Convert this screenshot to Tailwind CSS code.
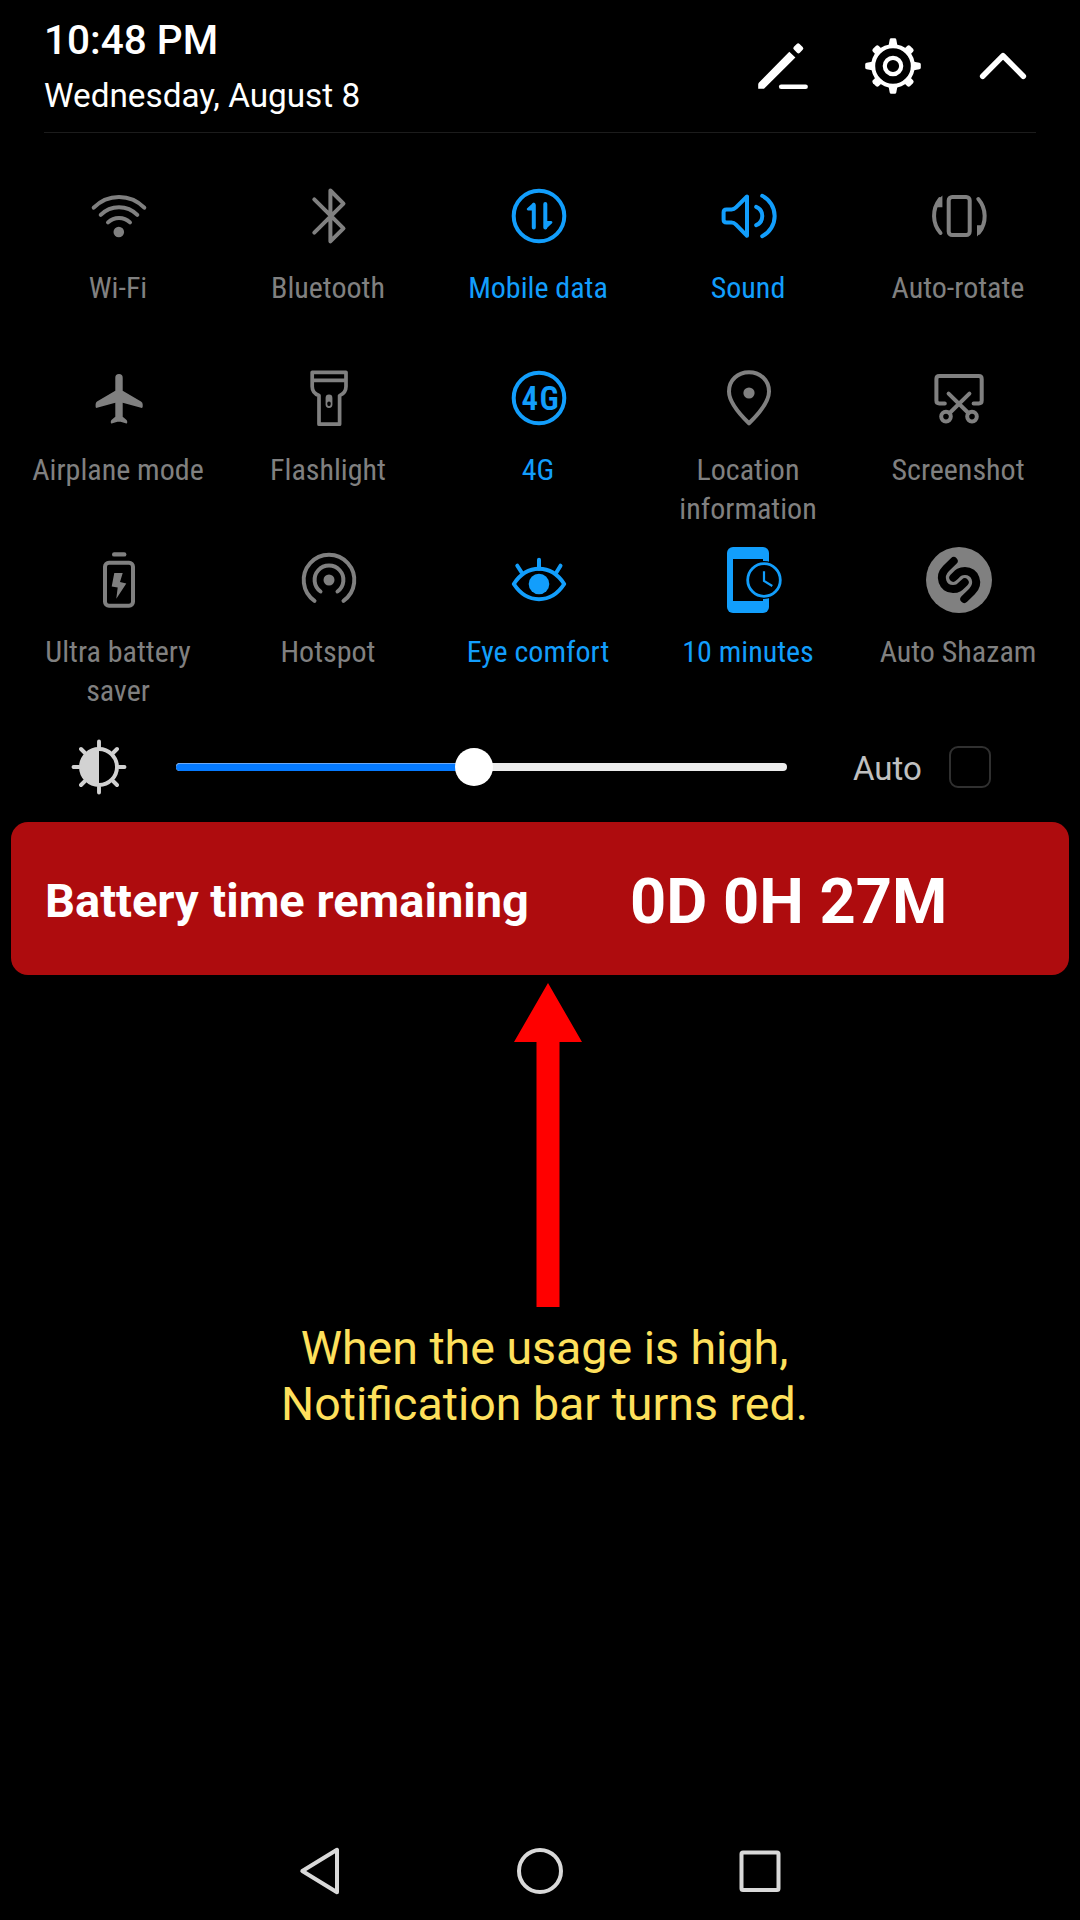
<!DOCTYPE html>
<html lang="en">
<head>
<meta charset="utf-8">
<title>Quick settings</title>
<script src="https://cdn.jsdelivr.net/npm/@tailwindcss/browser@4"></script>
</head>
<body class="bg-black">
<div class="flex h-[1920px] w-[1080px] flex-col overflow-hidden bg-black font-['Roboto',sans-serif] text-white">

  <!-- Header -->
  <header class="mx-11 flex h-[133px] items-start justify-between border-b border-[#1c1c1c]">
    <div class="pt-[17px]">
      <div class="text-[40.5px] leading-[47px] font-medium whitespace-nowrap">10:48 PM</div>
      <div class="mt-3 text-[33.3px] leading-[40px] whitespace-nowrap">Wednesday, August 8</div>
    </div>
    <div class="-mr-[3px] flex gap-[38px] pt-[30px]">
      <svg class="size-[72px]" viewBox="0 0 72 72" fill="white">
        <path d="M12 52.5 L42.3 21.7 L48.4 27.4 L17.5 58.2 Q17 58.7 16 58.7 H11.2 V54.5 Q11.2 53.3 12 52.5Z"/>
        <rect x="47.1" y="14.3" width="8.4" height="8" rx="2" transform="rotate(45 51.3 18.3)"/>
        <path d="M34.2 56.7H58.6" stroke="white" stroke-width="4.6" stroke-linecap="round"/>
      </svg>
      <svg class="size-[72px]" viewBox="0 0 72 72" fill="none" stroke="white" stroke-width="4">
        <circle cx="36" cy="36" r="19.8"/>
        <circle cx="36" cy="36" r="8.2" stroke-width="4.2"/>
        <g fill="white" stroke="none">
          <path id="tooth" d="M31.400 16.5 L32.700 9.6 Q32.900 8.2 34.2 8.2 H37.8 Q39.100 8.2 39.300 9.6 L40.600 16.5Z"/>
          <use href="#tooth" transform="rotate(90 36 36)"/>
          <use href="#tooth" transform="rotate(180 36 36)"/>
          <use href="#tooth" transform="rotate(270 36 36)"/>
          <path id="tooth2" d="M31.800 18 L31.800 11.8 Q32 9.700 34 9.700 H38 Q40 9.700 40.200 11.8 L40.200 18Z" transform="rotate(45 36 36)"/>
          <use href="#tooth2" transform="rotate(90 36 36)"/>
          <use href="#tooth2" transform="rotate(180 36 36)"/>
          <use href="#tooth2" transform="rotate(270 36 36)"/>
        </g>
      </svg>
      <svg class="size-[72px]" viewBox="0 0 72 72" fill="none" stroke="white" stroke-width="5.6" stroke-linecap="round" stroke-linejoin="round">
        <path d="M15.7 46.2 L36 25.8 L56.3 46.2"/>
      </svg>
    </div>
  </header>

  <!-- Toggles -->
  <main class="mr-[16px] ml-[14px] mt-[47px] grid h-[546px] grid-cols-5 grid-rows-3 text-center font-['Roboto_Condensed','Roboto',sans-serif] text-[30px] leading-[39px] text-[#808080] font-stretch-condensed">
    <div class="flex flex-col items-center gap-4">
      <svg class="size-[72px]" viewBox="0 0 72 72" fill="none" stroke="currentColor" stroke-width="4" stroke-linecap="round">
        <path d="M10.7 27.7A35 35 0 0 1 61.3 27.7M17.7 34.9A25.6 25.6 0 0 1 54.3 34.9M25 42.4A16 16 0 0 1 47 42.4"/>
        <circle cx="35.8" cy="52" r="5.3" fill="currentColor" stroke="none"/>
      </svg>
      <span class="-ml-[2px]">Wi-Fi</span>
    </div>
    <div class="flex flex-col items-center gap-4">
      <svg class="size-[72px]" viewBox="0 0 72 72" fill="none" stroke="currentColor" stroke-width="4" stroke-linecap="round" stroke-linejoin="round">
        <path d="M21.3 19.3L50.5 48.3L37.4 61.3V10.5L50.5 23.7L21.3 52.7"/>
      </svg>
      <span class="-ml-[2px]">Bluetooth</span>
    </div>
    <div class="flex flex-col items-center gap-4 text-[#129efc]">
      <svg class="size-[72px]" viewBox="0 0 72 72" fill="none" stroke="currentColor" stroke-width="4" stroke-linecap="round">
        <circle cx="36" cy="36" r="25.3"/>
        <path d="M30.8 25V47.6M42.3 24V47.5"/>
        <path d="M30.8 23.8L25 29.2H31M42.3 48L48.2 42.3H42" stroke-width="2.4" fill="currentColor" stroke-linejoin="round"/>
      </svg>
      <span class="-ml-[2px]">Mobile data</span>
    </div>
    <div class="flex flex-col items-center gap-4 text-[#129efc]">
      <svg class="size-[72px]" viewBox="0 0 72 72" fill="none" stroke="currentColor" stroke-width="4" stroke-linecap="round" stroke-linejoin="round">
        <path d="M34 16.5V55.8L23 44.6Q21 42.6 18.5 42.6H13.5Q10.6 42.6 10.6 39.8V32.2Q10.6 29.4 13.5 29.4H18.5Q21 29.4 23 27.4Z"/>
        <path d="M43.2 26.8A10 10 0 0 1 43.2 45.2M49.2 15.8A22.6 22.6 0 0 1 49.2 56.2"/>
      </svg>
      <span class="-ml-[2px]">Sound</span>
    </div>
    <div class="flex flex-col items-center gap-4">
      <svg class="size-[72px]" viewBox="0 0 72 72" fill="none" stroke="currentColor" stroke-width="4" stroke-linecap="round">
        <rect x="25.7" y="17" width="21" height="38" rx="3.5"/>
        <path d="M17.5 53A26.5 26.5 0 0 1 16.8 19.2M55.3 19A26.5 26.5 0 0 1 56 52.6"/>
        <path d="M18.600 17.5V26.500H14.3L16 20ZM54.8 54.5V46H59.5L57 52Z" stroke-width="1.6" fill="currentColor"/>
      </svg>
      <span class="-ml-[2px]">Auto-rotate</span>
    </div>

    <div class="flex flex-col items-center gap-4">
      <svg class="size-[72px]" viewBox="0 0 72 72" fill="currentColor">
        <path d="M32.3 15.7A3.7 3.7 0 0 1 39.7 15.7V28.7L58 39.6Q59.7 40.6 59.7 42.4V44.6Q59.7 46.3 58 45.8L39.7 40.7V54.7L43 57.4Q44.2 58.4 44.2 59.6V60.4Q44.2 61.8 42.6 61.2L37.6 59.7H34.4L29.4 61.2Q27.8 61.8 27.8 60.4V59.6Q27.8 58.4 29 57.4L32.3 54.7V40.7L14 45.8Q12.6 46.3 12.6 44.6V42.4Q12.6 40.6 14 39.6L32.3 28.7Z"/>
      </svg>
      <span class="-ml-[2px] whitespace-nowrap">Airplane mode</span>
    </div>
    <div class="flex flex-col items-center gap-4">
      <svg class="size-[72px]" viewBox="0 0 72 72" fill="none" stroke="currentColor" stroke-width="3.7" stroke-linejoin="round">
        <path d="M19.2 10.3H53V24.5Q53 31 46.6 33.6V62.2H26V33.6Q19.2 31 19.2 24.5ZM19.2 18.3H53"/>
        <rect x="32.6" y="32.6" width="6.8" height="13.4" rx="3.4" fill="currentColor" stroke="none"/>
        <ellipse cx="36" cy="41.8" rx="1.8" ry="2.4" class="fill-black" stroke="none"/>
      </svg>
      <span class="-ml-[2px]">Flashlight</span>
    </div>
    <div class="flex flex-col items-center gap-4 text-[#129efc]">
      <svg class="size-[72px]" viewBox="0 0 72 72">
        <circle cx="36" cy="36" r="25.3" fill="none" stroke="currentColor" stroke-width="4"/>
        <text x="18.400" y="47.6" class="text-[33px] font-semibold tracking-[1.5px]" fill="currentColor">4G</text>
      </svg>
      <span class="-ml-[2px]">4G</span>
    </div>
    <div class="flex flex-col items-center gap-4">
      <svg class="size-[72px]" viewBox="0 0 72 72" fill="none" stroke="currentColor" stroke-width="4" stroke-linejoin="round">
        <path d="M36 61.3C30 55.5 16 42 16 29.5C16 18 25 10.3 36 10.3S56 18 56 29.5C56 42 42 55.5 36 61.3Z"/>
        <circle cx="36" cy="31" r="5.6" fill="currentColor" stroke="none"/>
      </svg>
      <span class="-ml-[2px]">Location<br>information</span>
    </div>
    <div class="flex flex-col items-center gap-4">
      <svg class="size-[72px]" viewBox="0 0 72 72" fill="none" stroke="currentColor" stroke-width="4" stroke-linecap="round" stroke-linejoin="round">
        <path d="M21.8 41.4H16.3Q13.4 41.4 13.4 38.5V16.9Q13.4 14 16.3 14H55.8Q58.7 14 58.7 16.9V38.5Q58.7 41.4 55.8 41.4H50.6"/>
        <path d="M25.6 31.6L45.6 51.2M46.4 31.6L26.4 51.2"/>
        <circle cx="23" cy="54.6" r="4.8"/>
        <circle cx="49" cy="54.6" r="4.8"/>
      </svg>
      <span class="-ml-[2px]">Screenshot</span>
    </div>

    <div class="flex flex-col items-center gap-4">
      <svg class="size-[72px]" viewBox="0 0 72 72" fill="none" stroke="currentColor" stroke-width="4">
        <rect x="22" y="18.8" width="28" height="43" rx="4"/>
        <path d="M31.2 10.4H41.2" stroke-width="4.4" stroke-linecap="round"/>
        <path d="M31.3 29H39.7L37 38L43.3 39.5L33.3 54.7L34.7 43.5L28.7 42.5Z" fill="currentColor" stroke="none"/>
      </svg>
      <span class="-ml-[2px]">Ultra battery<br>saver</span>
    </div>
    <div class="flex flex-col items-center gap-4">
      <svg class="size-[72px]" viewBox="0 0 72 72" fill="none" stroke="currentColor" stroke-width="4" stroke-linecap="round">
        <path d="M21.5 56.8A25.3 25.3 0 1 1 50.5 56.8M27.5 47.5A14.4 14.4 0 1 1 44.5 47.5"/>
        <circle cx="36" cy="36" r="5.5" fill="currentColor" stroke="none"/>
      </svg>
      <span class="-ml-[2px]">Hotspot</span>
    </div>
    <div class="flex flex-col items-center gap-4 text-[#129efc]">
      <svg class="size-[72px]" viewBox="0 0 72 72" fill="none" stroke="currentColor" stroke-width="4" stroke-linecap="round" stroke-linejoin="round">
        <path d="M10.8 40C17 30.5 26 24.8 36 24.8S55 30.5 61.2 40C55 49.5 46 55.2 36 55.2S17 49.5 10.8 40Z"/>
        <path d="M36 15.8V25M14.3 21.7L18.5 28.3M57.5 21.7L53.5 28.3"/>
        <circle cx="36" cy="40" r="10.3" fill="currentColor" stroke="none"/>
      </svg>
      <span class="-ml-[2px]">Eye comfort</span>
    </div>
    <div class="flex flex-col items-center gap-4 text-[#129efc]">
      <svg class="size-[72px]" viewBox="0 0 72 72" fill="none">
        <rect x="14" y="3" width="42" height="66" rx="6" fill="currentColor"/>
        <rect x="20" y="15" width="30" height="42" class="fill-black"/>
        <circle cx="51" cy="36" r="19" class="fill-black"/>
        <circle cx="51" cy="36" r="16.3" stroke="currentColor" stroke-width="2.8"/>
        <path d="M51 27.3V37L59.3 42" stroke="currentColor" stroke-width="2.2"/>
      </svg>
      <span class="-ml-[2px]">10 minutes</span>
    </div>
    <div class="flex flex-col items-center gap-4">
      <svg class="size-[72px]" viewBox="0 0 72 72" fill="none">
        <circle cx="36" cy="36" r="33" fill="currentColor"/>
        <path d="M30.7 17L23 24.5C15 32.5 19.5 45 30 45C36 45 37.5 42.3 41.7 38.3M41.3 55L49 47.5C57 39.5 52.5 27 42 27C36 27 34.5 29.7 30.3 33.7" class="stroke-black" stroke-width="8" stroke-linecap="round"/>
      </svg>
      <span class="-ml-[2px]">Auto Shazam</span>
    </div>
  </main>

  <!-- Brightness -->
  <section class="mt-[5px] flex h-[72px] items-center pl-[63px]">
    <svg class="size-[72px]" viewBox="0 0 72 72" fill="none" stroke="#d2d2d2" stroke-width="3.9" stroke-linecap="round">
      <circle cx="36" cy="36" r="18"/>
      <path d="M36 18A18 18 0 0 0 36 54Z" fill="#d2d2d2" stroke="none"/>
      <path d="M36 10.5V16M36 56V61.5M10.5 36H16M56 36H61.5M18 18L22 22M50 50L54 54M54 18L50 22M22 50L18 54"/>
    </svg>
    <div class="relative ml-[41px] h-2 w-[611px] rounded-full bg-[#ececec]">
      <div class="h-2 rounded-full border-t border-[#6ba9f5] bg-[#057aff]" style="width:48.8%"></div>
      <div class="absolute -top-[15px] size-[38px] -translate-x-1/2 rounded-full bg-white" style="left:48.8%"></div>
    </div>
    <div class="ml-[66px] w-[70px] pt-[3px] text-[33px] leading-[38px] text-[#c0c0c0]">Auto</div>
    <div class="ml-[26px] size-[42px] rounded-[9px] border-2 border-[#303030]"></div>
  </section>

  <!-- Battery notification -->
  <section class="mx-[11px] mt-[19px] flex h-[153px] items-center rounded-[17px] bg-[#ae0c0e] pl-[34px] font-bold whitespace-nowrap">
    <div class="w-[585px] pt-[5px] text-[47px] leading-[56px]">Battery time remaining</div>
    <div class="pt-[5px] text-[63.2px] leading-[74px]">0D 0H 27M</div>
  </section>

  <!-- Callout -->
  <section class="mt-2 flex flex-col items-center pl-[16px]">
    <svg class="h-[324px] w-[68px]" viewBox="0 0 68 324" fill="#ff0000">
      <path d="M34 0L68 59H45.5V324H22.5V59H0Z"/>
    </svg>
    <p class="mt-[13px] -ml-[7px] text-center text-[46.5px] leading-[56px] whitespace-nowrap text-[#fee05c]">When the usage is high,<br>Notification bar turns red.</p>
  </section>

  <!-- Navigation -->
  <nav class="mt-auto mb-[13px] flex h-[72px] justify-center gap-[148px]">
    <svg class="size-[72px]" viewBox="0 0 72 72" fill="none" stroke="#d9d9d9" stroke-width="4" stroke-linejoin="round">
      <path d="M18.3 36L53 14.8V57.2Z"/>
    </svg>
    <svg class="size-[72px]" viewBox="0 0 72 72" fill="none" stroke="#d9d9d9" stroke-width="4">
      <circle cx="36" cy="36" r="21"/>
    </svg>
    <svg class="size-[72px]" viewBox="0 0 72 72" fill="none" stroke="#d9d9d9" stroke-width="4">
      <rect x="17.5" y="17.5" width="37" height="37.5" rx="1.5"/>
    </svg>
  </nav>
</div>
</body>
</html>
